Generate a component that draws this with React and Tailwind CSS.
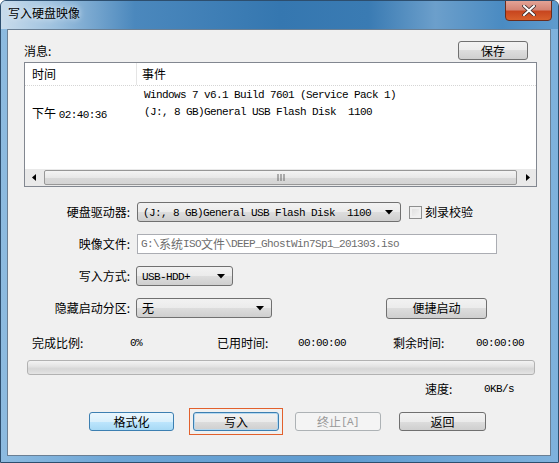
import React from 'react';

const mono = "font-['Liberation_Mono',monospace] text-[11px] tracking-[-0.6px]";

function Arrow() {
  return (
    <svg width="8" height="5" viewBox="0 0 8 5" className="shrink-0">
      <path d="M0 0 H8 L4 4.5 Z" fill="#000" />
    </svg>
  );
}

function Combo({ width, children }) {
  return (
    <div
      className={`${width} h-[20px] flex items-center justify-between pl-[5px] pr-[7px] border border-[#707070] rounded-[3px] bg-[linear-gradient(#f2f2f2_0%,#ebebeb_50%,#dddddd_50%,#cfcfcf_100%)]`}
    >
      <span className="whitespace-nowrap">{children}</span>
      <Arrow />
    </div>
  );
}

function Btn({ children, kind = 'normal', className = '' }) {
  const styles = {
    normal: 'border-[#707070] bg-[linear-gradient(#f2f2f2_0%,#ebebeb_50%,#dddddd_50%,#cfcfcf_100%)] text-black',
    hot: 'border-[#3c7fb1] bg-[linear-gradient(#eaf6fd_0%,#d9f0fc_50%,#bee6fd_50%,#a7d9f5_100%)] text-black',
    focus: 'border-[#3c7fb1] bg-[linear-gradient(#f2f2f2_0%,#ebebeb_50%,#dddddd_50%,#cfcfcf_100%)] text-black shadow-[inset_0_0_0_1px_#b5d8f0]',
    disabled: 'border-[#adb2b5] bg-[#f4f4f4] text-[#9a9a9a]',
  };
  return (
    <div
      className={`h-[19px] flex items-center justify-center border rounded-[3px] ${styles[kind]} ${className}`}
    >
      {children}
    </div>
  );
}

export default function App() {
  return (
    <div className="w-[559px] h-[463px] flex flex-col overflow-hidden rounded-t-[6px] border border-[#2d4e6e] bg-[linear-gradient(90deg,#8dbbe0_0%,#6ea6d6_20%,#5e9bd0_60%,#7fb2dd_100%)] font-['Noto_Sans_CJK_SC',sans-serif] text-[12px] leading-[14px] text-black">
      {/* title bar */}
      <div className="relative h-[28px] shrink-0 bg-[linear-gradient(90deg,#c9dcec_0%,#9cc0de_10%,#4b88bd_24%,#3577b0_50%,#3a7bb3_66%,#6c9fcb_78%,#4a8bc2_90%,#5f9bcd_100%)]">
        <div className="pl-[7px] pt-[5px] text-[12px] leading-[14px] text-black [text-shadow:0_0_6px_#ffffff]">
          写入硬盘映像
        </div>
        <div className="absolute right-[6px] top-[-1px] w-[47px] h-[21px] rounded-b-[4px] border border-[#6b2c1c] bg-[linear-gradient(#e3a396_0%,#d48575_45%,#c8461f_55%,#d8602c_100%)] flex items-center justify-center">
          <svg width="14" height="11" viewBox="0 0 14 11">
            <path d="M2 1 L12 10 M12 1 L2 10" stroke="#3a2a2a" strokeWidth="3.6" strokeLinecap="square" />
            <path d="M2 1 L12 10 M12 1 L2 10" stroke="#ffffff" strokeWidth="2" strokeLinecap="square" />
          </svg>
        </div>
      </div>

      {/* client area */}
      <div className="ml-[6px] mr-[7px] mb-[6px] flex-1 flex flex-col border border-[#6a7f94] bg-[#f0f0f0]">
        {/* message header */}
        <div className="mt-[11px] h-[19px] flex items-center justify-between pl-[16px] pr-[22px]">
          <span>消息:</span>
          <Btn className="w-[70px]">保存</Btn>
        </div>

        {/* list */}
        <div className="mt-[2px] ml-[16px] w-[513px] h-[125px] flex flex-col border border-[#828790] bg-white">
          <div className="h-[23px] shrink-0 flex border-b border-dotted border-[#d5d5d5]">
            <div className="w-[112px] pl-[7px] flex items-center border-r border-[#e5e5e5]">时间</div>
            <div className="flex-1 pl-[5px] flex items-center">事件</div>
          </div>
          <div className="flex-1 flex pt-[1px] leading-[17px]">
            <div className="w-[112px] pl-[7px]">
              <div className="h-[17px]" />
              <div className="whitespace-nowrap">
                下午 <span className={mono}>02:40:36</span>
              </div>
            </div>
            <div className={`flex-1 pl-[7px] whitespace-nowrap ${mono}`}>
              <div className="h-[17px] leading-[17px]">Windows 7 v6.1 Build 7601 (Service Pack 1)</div>
              <div className="h-[17px] leading-[17px]">(J:, 8 GB)General USB Flash Disk&nbsp;&nbsp;1100</div>
            </div>
          </div>
          {/* horizontal scrollbar */}
          <div className="h-[17px] shrink-0 flex items-center bg-[#e9e9e9]">
            <div className="w-[17px] h-full flex items-center justify-center">
              <svg width="4" height="7" viewBox="0 0 4 7"><path d="M4 0 V7 L0 3.5 Z" fill="#000" /></svg>
            </div>
            <div className="flex-1 h-full flex items-center px-[2px]">
              <div className="w-full h-[15px] flex items-center justify-center rounded-[2px] border border-[#979797] bg-[linear-gradient(#f4f4f4_0%,#e8e8e8_50%,#d9d9d9_50%,#d4d4d4_100%)]">
                <svg width="8" height="7" viewBox="0 0 8 7">
                  <path d="M1 0 V7 M4 0 V7 M7 0 V7" stroke="#6b6b6b" strokeWidth="1" />
                </svg>
              </div>
            </div>
            <div className="w-[17px] h-full flex items-center justify-center">
              <svg width="4" height="7" viewBox="0 0 4 7"><path d="M0 0 V7 L4 3.5 Z" fill="#000" /></svg>
            </div>
          </div>
        </div>

        {/* form rows */}
        <div className="mt-[15px] flex flex-col gap-[12px]">
          <div className="h-[20px] flex items-center">
            <span className="w-[122px] text-right whitespace-nowrap">硬盘驱动器:</span>
            <div className="ml-[7px]">
              <Combo width="w-[264px]">
                <span className={mono}>(J:, 8 GB)General USB Flash Disk&nbsp;&nbsp;1100</span>
              </Combo>
            </div>
            <div className="ml-[8px] w-[13px] h-[13px] border border-[#8e8f8f] bg-[linear-gradient(135deg,#dcdcdc,#f6f6f6)] shadow-[inset_0_0_0_2px_#f0f0f0]" />
            <span className="ml-[3px]">刻录校验</span>
          </div>
          <div className="h-[20px] flex items-center">
            <span className="w-[122px] text-right">映像文件:</span>
            <div className={`ml-[7px] w-[360px] h-[20px] flex items-center pl-[3px] border border-[#abadb3] bg-white text-[#6d6d6d] whitespace-nowrap ${mono}`}>
              G:\<span className="font-['Noto_Sans_CJK_SC',sans-serif] text-[12px] tracking-normal">系统</span>ISO<span className="font-['Noto_Sans_CJK_SC',sans-serif] text-[12px] tracking-normal">文件</span>\DEEP_GhostWin7Sp1_201303.iso
            </div>
          </div>
          <div className="h-[20px] flex items-center">
            <span className="w-[122px] text-right">写入方式:</span>
            <div className="ml-[6px]">
              <Combo width="w-[97px]">
                <span className={mono}>USB-HDD+</span>
              </Combo>
            </div>
          </div>
          <div className="h-[20px] flex items-center">
            <span className="w-[122px] text-right">隐藏启动分区:</span>
            <div className="ml-[6px]">
              <Combo width="w-[136px]">无</Combo>
            </div>
            <Btn className="ml-[114px] w-[101px] h-[21px]">便捷启动</Btn>
          </div>
        </div>

        {/* progress labels */}
        <div className="mt-[18px] h-[14px] flex items-center pl-[24px] whitespace-nowrap">
          <span className="w-[98px]">完成比例:</span>
          <span className={`w-[87px] ${mono}`}>0%</span>
          <span className="w-[81px]">已用时间:</span>
          <span className={`w-[95px] ${mono}`}>00:00:00</span>
          <span className="w-[83px]">剩余时间:</span>
          <span className={mono}>00:00:00</span>
        </div>

        {/* progress bar */}
        <div className="mt-[10px] ml-[19px] w-[508px] h-[15px] rounded-[3px] border border-[#b2b2b2] bg-[linear-gradient(#f3f3f3_0%,#e4e4e4_40%,#d6d6d6_60%,#e4e4e4_100%)]" />

        {/* speed */}
        <div className="mt-[7px] h-[14px] flex items-center pl-[417px] whitespace-nowrap">
          <span className="w-[59px]">速度:</span>
          <span className={mono}>0KB/s</span>
        </div>

        {/* buttons */}
        <div className="mt-[12px] flex items-center pl-[81px]">
          <Btn kind="hot" className="w-[85px]">格式化</Btn>
          <div className="ml-[15px] p-[3px] border border-[#e2602c]">
            <Btn kind="focus" className="w-[86px]">写入</Btn>
          </div>
          <Btn kind="disabled" className="ml-[12px] w-[86px]">
            终止<span className={mono}>[A]</span>
          </Btn>
          <Btn className="ml-[18px] w-[87px]">返回</Btn>
        </div>
      </div>
    </div>
  );
}
